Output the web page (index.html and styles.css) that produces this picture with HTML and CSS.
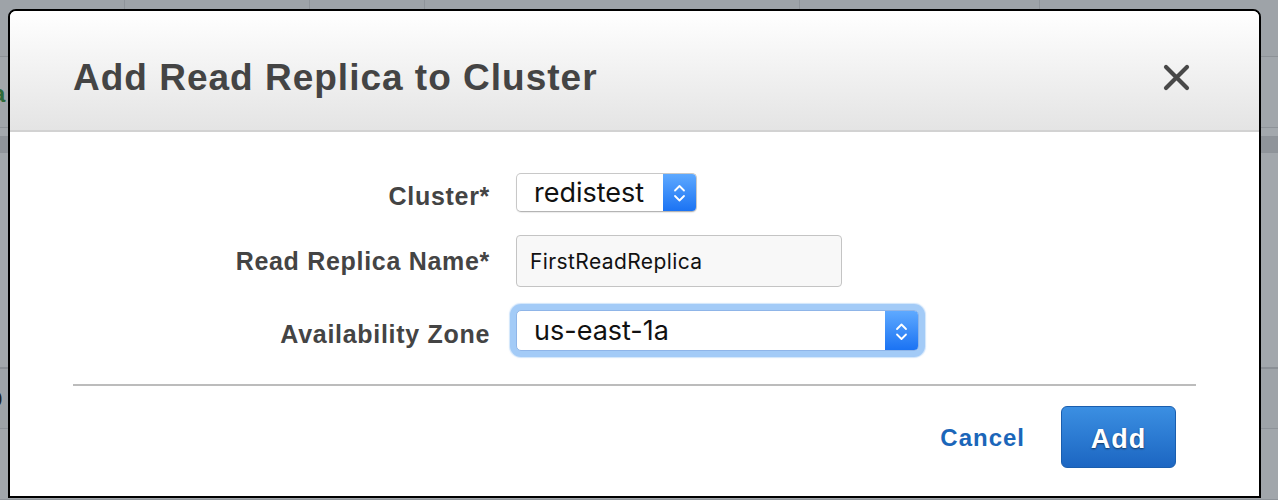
FILE: index.html
```html
<!DOCTYPE html>
<html lang="en">
<head>
<meta charset="utf-8">
<title>Add Read Replica to Cluster</title>
<link rel="stylesheet" href="styles.css">
</head>
<body>
<div class="bg">
  <div class="bg-head">
    <span class="bg-col c1"></span><span class="bg-col c2"></span><span class="bg-col c3"></span><span class="bg-col c4"></span><span class="bg-col c5"></span><span class="bg-col c6">ro</span>
  </div>
  <div class="bg-row r1"><span class="green">a</span></div>
  <div class="bg-row r2"></div>
  <div class="bg-row r3"></div>
  <div class="bg-row r4"></div>
  <div class="bg-row r5"><span class="dark">o</span></div>
  <div class="bg-row r6"></div>
</div>

<div class="modal" role="dialog" aria-labelledby="dlg-title">
  <div class="modal-header">
    <h1 id="dlg-title" class="title">Add Read Replica to Cluster</h1>
    <button class="close" aria-label="Close">
      <svg width="27" height="27" viewBox="0 0 27 27"><path d="M3 3 L24 24 M24 3 L3 24" stroke="#484848" stroke-width="4.2" stroke-linecap="round" fill="none"/></svg>
    </button>
  </div>
  <div class="modal-body">
    <div class="form">
      <label class="lbl lbl-low">Cluster*</label>
      <div class="select select-cluster">
        <span class="select-value">redistest</span>
        <span class="arrows">
          <svg width="33" height="38" viewBox="0 0 33 38"><path d="M12 16.5 L16.5 12 L21 16.5 M12 22 L16.5 26.5 L21 22" stroke="#fff" stroke-width="1.8" fill="none" stroke-linecap="round" stroke-linejoin="round"/></svg>
        </span>
      </div>

      <label class="lbl">Read Replica Name*</label>
      <div class="input">FirstReadReplica</div>

      <label class="lbl lbl-low">Availability Zone</label>
      <div class="select select-zone">
        <span class="select-value">us-east-1a</span>
        <span class="arrows">
          <svg width="33" height="41" viewBox="0 0 33 41"><path d="M12 18 L16.5 13.5 L21 18 M12 23.5 L16.5 28 L21 23.5" stroke="#fff" stroke-width="1.8" fill="none" stroke-linecap="round" stroke-linejoin="round"/></svg>
        </span>
      </div>
    </div>
    <div class="divider"></div>
    <div class="footer">
      <a class="cancel" href="#">Cancel</a>
      <button class="add">Add</button>
    </div>
  </div>
</div>
</body>
</html>
```

FILE: styles.css
```css
* { box-sizing: border-box; }

html, body {
  margin: 0;
  padding: 0;
}

body {
  width: 1278px;
  height: 500px;
  overflow: hidden;
  background: #9fa4a9;
  font-family: "Liberation Sans", Arial, sans-serif;
  position: relative;
}

/* faded page behind the dialog */
.bg {
  display: flex;
  flex-direction: column;
  height: 500px;
}

.bg-head {
  height: 57px;
  display: flex;
  background: #9ea3a8;
  border-bottom: 1px solid #8d9297;
}

.bg-col {
  border-right: 1px solid #8f949a;
  color: #3c4248;
  font-weight: bold;
  font-size: 18px;
  padding: 12px 0 0 4px;
}

.c1 { width: 125px; }
.c2 { width: 185px; }
.c3 { width: 115px; }
.c4 { width: 375px; }
.c5 { width: 240px; }
.c6 { flex: 1; border-right: 0; padding-left: 1222px; margin-left: -1040px; }

.bg-row { border-bottom: 1px solid #8e9399; position: relative; }
.r1 { height: 71px; background: #a1a6ab; }
.r2 { height: 9px; background: #a3a8ad; }
.r3 { height: 16px; background: #8f949a; }
.r4 { height: 216px; background: #a2a7ac; border-bottom: 2px solid #8b9096; }
.r5 { height: 60px; background: #9ea3a8; }
.r6 { flex: 1; background: #a1a6ab; }

.green {
  color: #2d6b3b;
  font-size: 24px;
  font-weight: bold;
  margin-left: -8px;
  line-height: 74px;
}

.dark {
  color: #222;
  font-size: 30px;
  margin-left: -14px;
  line-height: 56px;
}

/* dialog */
.modal {
  position: absolute;
  left: 8px;
  top: 9px;
  width: 1253px;
  height: 489px;
  background: #fff;
  border: 2px solid #000;
  border-radius: 8px 8px 0 0;
  display: flex;
  flex-direction: column;
}

.modal-header {
  height: 121px;
  flex: none;
  display: flex;
  align-items: center;
  justify-content: space-between;
  padding: 14px 69px 0 63px;
  background: linear-gradient(#ffffff, #e4e4e4);
  border-bottom: 2px solid #d2d2d2;
  border-radius: 6px 6px 0 0;
}

.title {
  margin: 0;
  font-size: 37px;
  line-height: 37px;
  letter-spacing: 1px;
  font-weight: bold;
  color: #444;
}

.close {
  border: 0;
  background: none;
  padding: 0;
  display: flex;
  cursor: pointer;
}

.modal-body {
  flex: 1;
  padding: 41px 63px 0 63px;
  display: flex;
  flex-direction: column;
}

.form {
  display: grid;
  grid-template-columns: 417px 1fr;
  grid-template-rows: 39px 52px 41px;
  column-gap: 26px;
  row-gap: 23px;
  align-items: center;
}

.lbl {
  justify-self: end;
  font-size: 25px;
  font-weight: bold;
  letter-spacing: 0.7px;
  color: #444;
}

.lbl-low { padding-top: 8px; }

.select {
  display: flex;
  align-items: stretch;
  background: #fff;
  border: 1px solid #c8c8c8;
  border-bottom-color: #b4b4b4;
  border-radius: 5px;
  box-shadow: 0 1px 1px rgba(0, 0, 0, 0.08);
  overflow: hidden;
  height: 100%;
}

.select-value {
  flex: 1;
  display: flex;
  align-items: center;
  padding-left: 17px;
  font-family: "Inter", "Liberation Sans", sans-serif;
  font-size: 27px;
  color: #111;
}

.arrows {
  width: 33px;
  flex: none;
  display: flex;
  background: linear-gradient(#5ea9ff, #1b73f3);
}

.select-cluster { width: 181px; }

.select-zone {
  width: 403px;
  border-color: #8fb5e8;
  box-shadow: 0 0 0 6px #a3cbf7, 0 0 1px 7px rgba(163, 203, 247, 0.5);
}

.input {
  width: 326px;
  height: 100%;
  display: flex;
  align-items: center;
  padding-left: 13px;
  background: #f8f8f8;
  border: 1px solid #c4c4c4;
  border-radius: 4px;
  font-family: "Inter", "Liberation Sans", sans-serif;
  font-size: 21px;
  letter-spacing: 0.4px;
  color: #111;
}

.divider {
  margin-top: 33px;
  height: 2px;
  background: #bcbcbc;
}

.footer {
  margin-top: 20px;
  display: flex;
  justify-content: flex-end;
  align-items: center;
  gap: 36px;
  padding-right: 20px;
}

.cancel {
  color: #1b66b9;
  text-decoration: none;
  font-weight: bold;
  font-size: 24px;
  letter-spacing: 1px;
  padding-top: 2px;
}

.add {
  width: 115px;
  height: 62px;
  border: 1px solid #1a5eae;
  border-radius: 6px;
  background: linear-gradient(#3b8fe2, #1c66c2);
  color: #fff;
  font-family: "Liberation Sans", Arial, sans-serif;
  font-weight: bold;
  font-size: 27px;
  letter-spacing: 1px;
  text-shadow: 0 1px 2px rgba(0, 0, 0, 0.55);
  padding: 4px 0 0;
  cursor: pointer;
}
```
